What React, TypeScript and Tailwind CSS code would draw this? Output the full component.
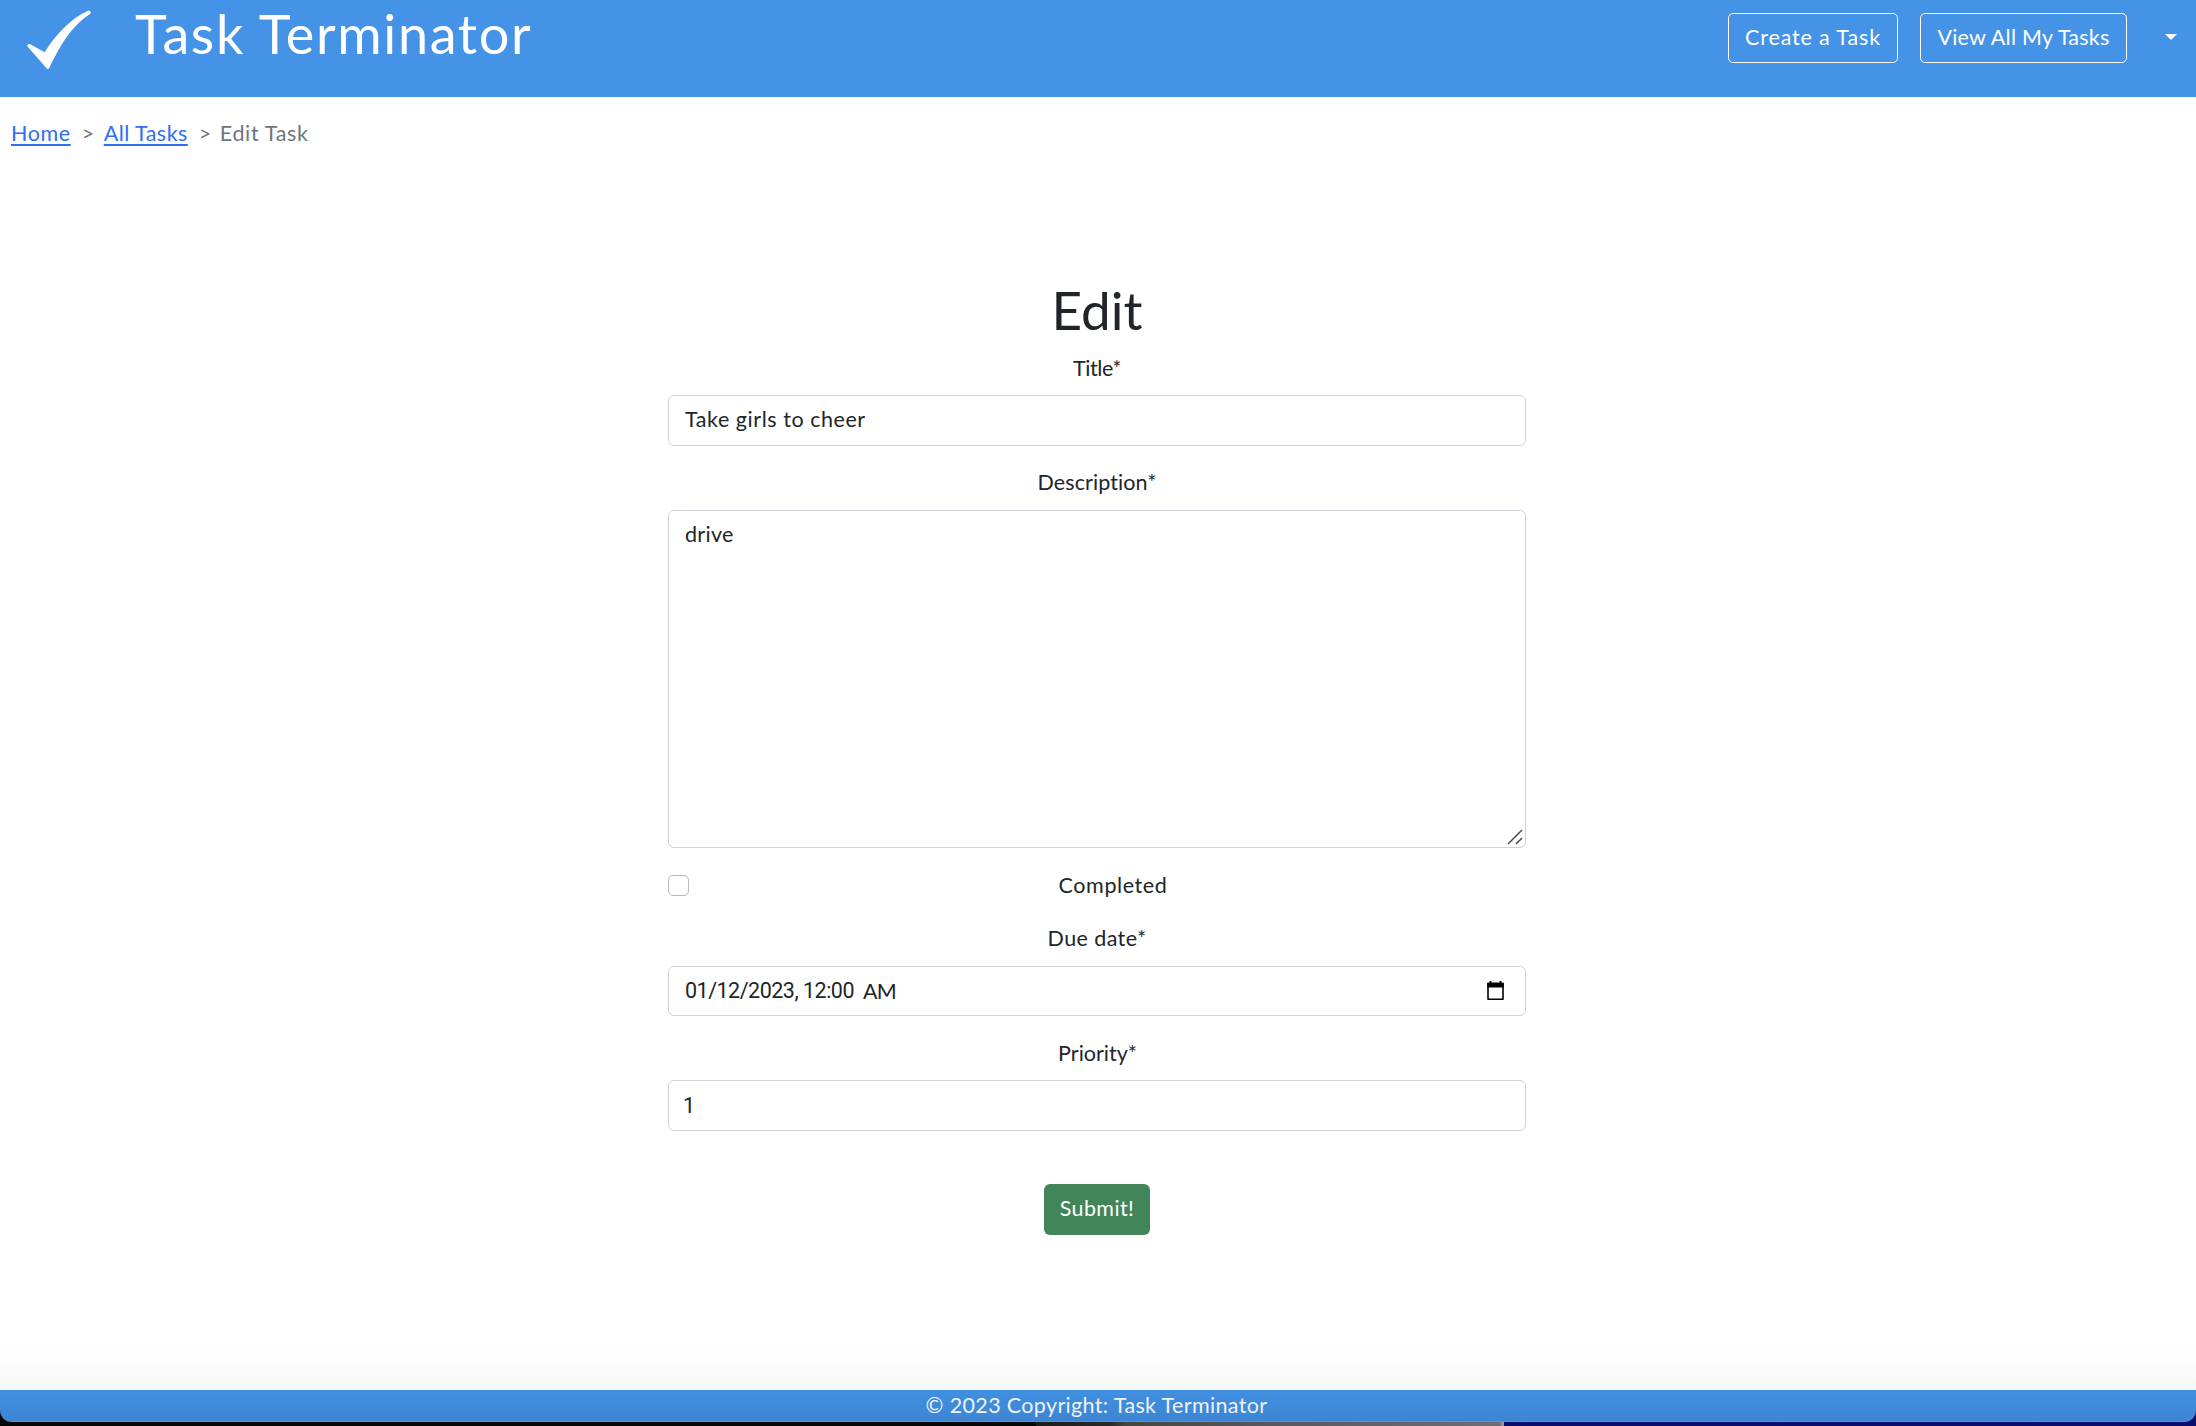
import React from "react";

function CheckLogo() {
  return (
    <svg className="block h-20 w-20" viewBox="0 0 80 80" fill="#fff" aria-hidden="true">
      <path d="M7.3 46.2C7.1 44.6 8.2 43.6 9.8 44L24.7 52.2C35 36 49 19.5 68 10.8C70 10.1 71.8 11.8 70.4 13.7C54 24.5 43.5 38.5 29.2 68C28.6 69.4 27.4 69.4 26.6 68.2Z" />
    </svg>
  );
}

function CalendarIcon() {
  return (
    <svg className="block h-5 w-[17px]" viewBox="0 0 17 20" aria-hidden="true">
      <path d="M1 2.2h15v16H1z" fill="none" stroke="#000" strokeWidth="1.6" strokeLinejoin="round" />
      <path d="M.3 2h16.4v4.4H.3zM2.6 0h1.8v3H2.6zM12.6 0h1.8v3h-1.8z" fill="#000" />
    </svg>
  );
}

function Header() {
  return (
    <header className="flex h-[97px] items-start bg-[#4493e7] pl-5 text-white">
      <CheckLogo />
      <h1 className="ml-[35px] text-[54px] leading-[68px] tracking-[1.65px]">Task Terminator</h1>
      <nav className="ml-auto flex items-start gap-[22px] pt-[13px]">
        <button className="flex h-[50px] w-[170px] items-center justify-center rounded-[5px] border border-white pb-px tracking-[0.85px]">
          Create a Task
        </button>
        <button className="flex h-[50px] w-[207px] items-center justify-center rounded-[5px] border border-white pb-px tracking-[0.25px]">
          View All My Tasks
        </button>
        <button className="mt-[21px] mr-[19px] ml-4" aria-label="Account menu">
          <svg className="block h-[6px] w-3" viewBox="0 0 12 6" fill="#fff">
            <path d="M0 0h12L6 6z" />
          </svg>
        </button>
      </nav>
    </header>
  );
}

function Breadcrumb() {
  return (
    <nav className="mt-5 flex h-8 pl-[11px] leading-[33px] whitespace-nowrap text-[#6c757d]">
      <a href="#" className="tracking-[0.6px] text-[#2f6df6] underline decoration-2 underline-offset-[3px]">Home</a>
      <span className="w-[33px] pl-[11px]">&gt;</span>
      <a href="#" className="tracking-[0.45px] text-[#2f6df6] underline decoration-2 underline-offset-[3px]">All Tasks</a>
      <span className="w-[32px] pl-[11px]">&gt;</span>
      <span className="tracking-[0.65px]">Edit Task</span>
    </nav>
  );
}

function EditForm() {
  return (
    <form className="mt-[127px] ml-[668px] flex w-[858px] flex-col text-[#212529]">
      <h2 className="h-[66px] text-center text-[53px] leading-[68px]">Edit</h2>

      <label className="mt-[9px] h-[33px] text-center leading-[35px] tracking-[-0.4px]">Title*</label>
      <input
        className="mt-[11px] h-[51px] rounded-md border border-[#ced4da] px-4 pb-[3px] tracking-[0.55px]"
        defaultValue="Take girls to cheer"
      />

      <label className="mt-[19px] h-[33px] text-center leading-[35px] tracking-[0.1px]">Description*</label>
      <div className="relative mt-3 h-[338px]">
        <textarea
          className="block h-full w-full resize-none rounded-md border border-[#ced4da] px-4 pt-[7px] leading-[33px] tracking-[0.3px]"
          defaultValue="drive"
        />
        <svg className="absolute right-[3px] bottom-[3px] h-4 w-4" viewBox="0 0 16 16" stroke="#4a4a4a" strokeWidth="1.5" aria-hidden="true">
          <path d="M1 15L15 1M9 15L15 9" />
        </svg>
      </div>

      <div className="mt-[21px] flex h-8 items-center">
        <input type="checkbox" className="h-[21px] w-[21px] appearance-none rounded-[5px] border border-[#b8b8b8] bg-white" />
        <label className="ml-[11px] flex-1 text-center leading-[34px] tracking-[0.6px]">Completed</label>
      </div>

      <label className="mt-5 h-[33px] text-center leading-[35px] tracking-[0.4px]">Due date*</label>
      <div className="mt-3 flex h-[50px] items-center rounded-md border border-[#ced4da] pr-[21px] pl-4">
        <div className="flex items-center gap-[9px]">
          <span className="font-[Roboto,sans-serif] tracking-[-0.5px]">01/12/2023, 12:00</span>
          <span className="tracking-[-0.8px]">AM</span>
        </div>
        <div className="ml-auto">
          <CalendarIcon />
        </div>
      </div>

      <label className="mt-5 h-[33px] pl-px text-center leading-[35px]">Priority*</label>
      <input
        className="mt-[11px] h-[51px] rounded-md border border-[#ced4da] px-[14px] font-[Roboto,sans-serif]"
        defaultValue="1"
      />

      <button
        type="button"
        className="mt-[53px] flex h-[51px] w-[106px] items-center justify-center self-center rounded-md bg-[#418559] pb-[3px] tracking-[0.4px] text-white"
      >
        Submit!
      </button>
    </form>
  );
}

export default function App() {
  return (
    <div className="flex h-[1426px] w-[2196px] flex-col overflow-hidden bg-white font-[Lato,sans-serif] text-[21.5px]">
      <Header />
      <Breadcrumb />
      <EditForm />
      <div className="mt-auto h-[45px] bg-linear-to-b from-white to-[#f7f7f7]" />
      <div className="h-9 shrink-0 bg-[linear-gradient(to_right,#050606_0,#050606_1036px,#1d1c1d_1036px,#2a292a_1110px,#45453f_1125px,#55555a_1250px,#6d6e73_1500px,#999_1502px,#999_1504px,#0a0f6b_1504px)]">
        <footer className="h-8 rounded-b-[12px] border-b border-[#5595d5] bg-linear-to-b from-[#4190e1] to-[#3d85d3] pr-[3px] text-center leading-[31px] tracking-[0.35px] text-[#eef3f9]">
          © 2023 Copyright: Task Terminator
        </footer>
      </div>
    </div>
  );
}
